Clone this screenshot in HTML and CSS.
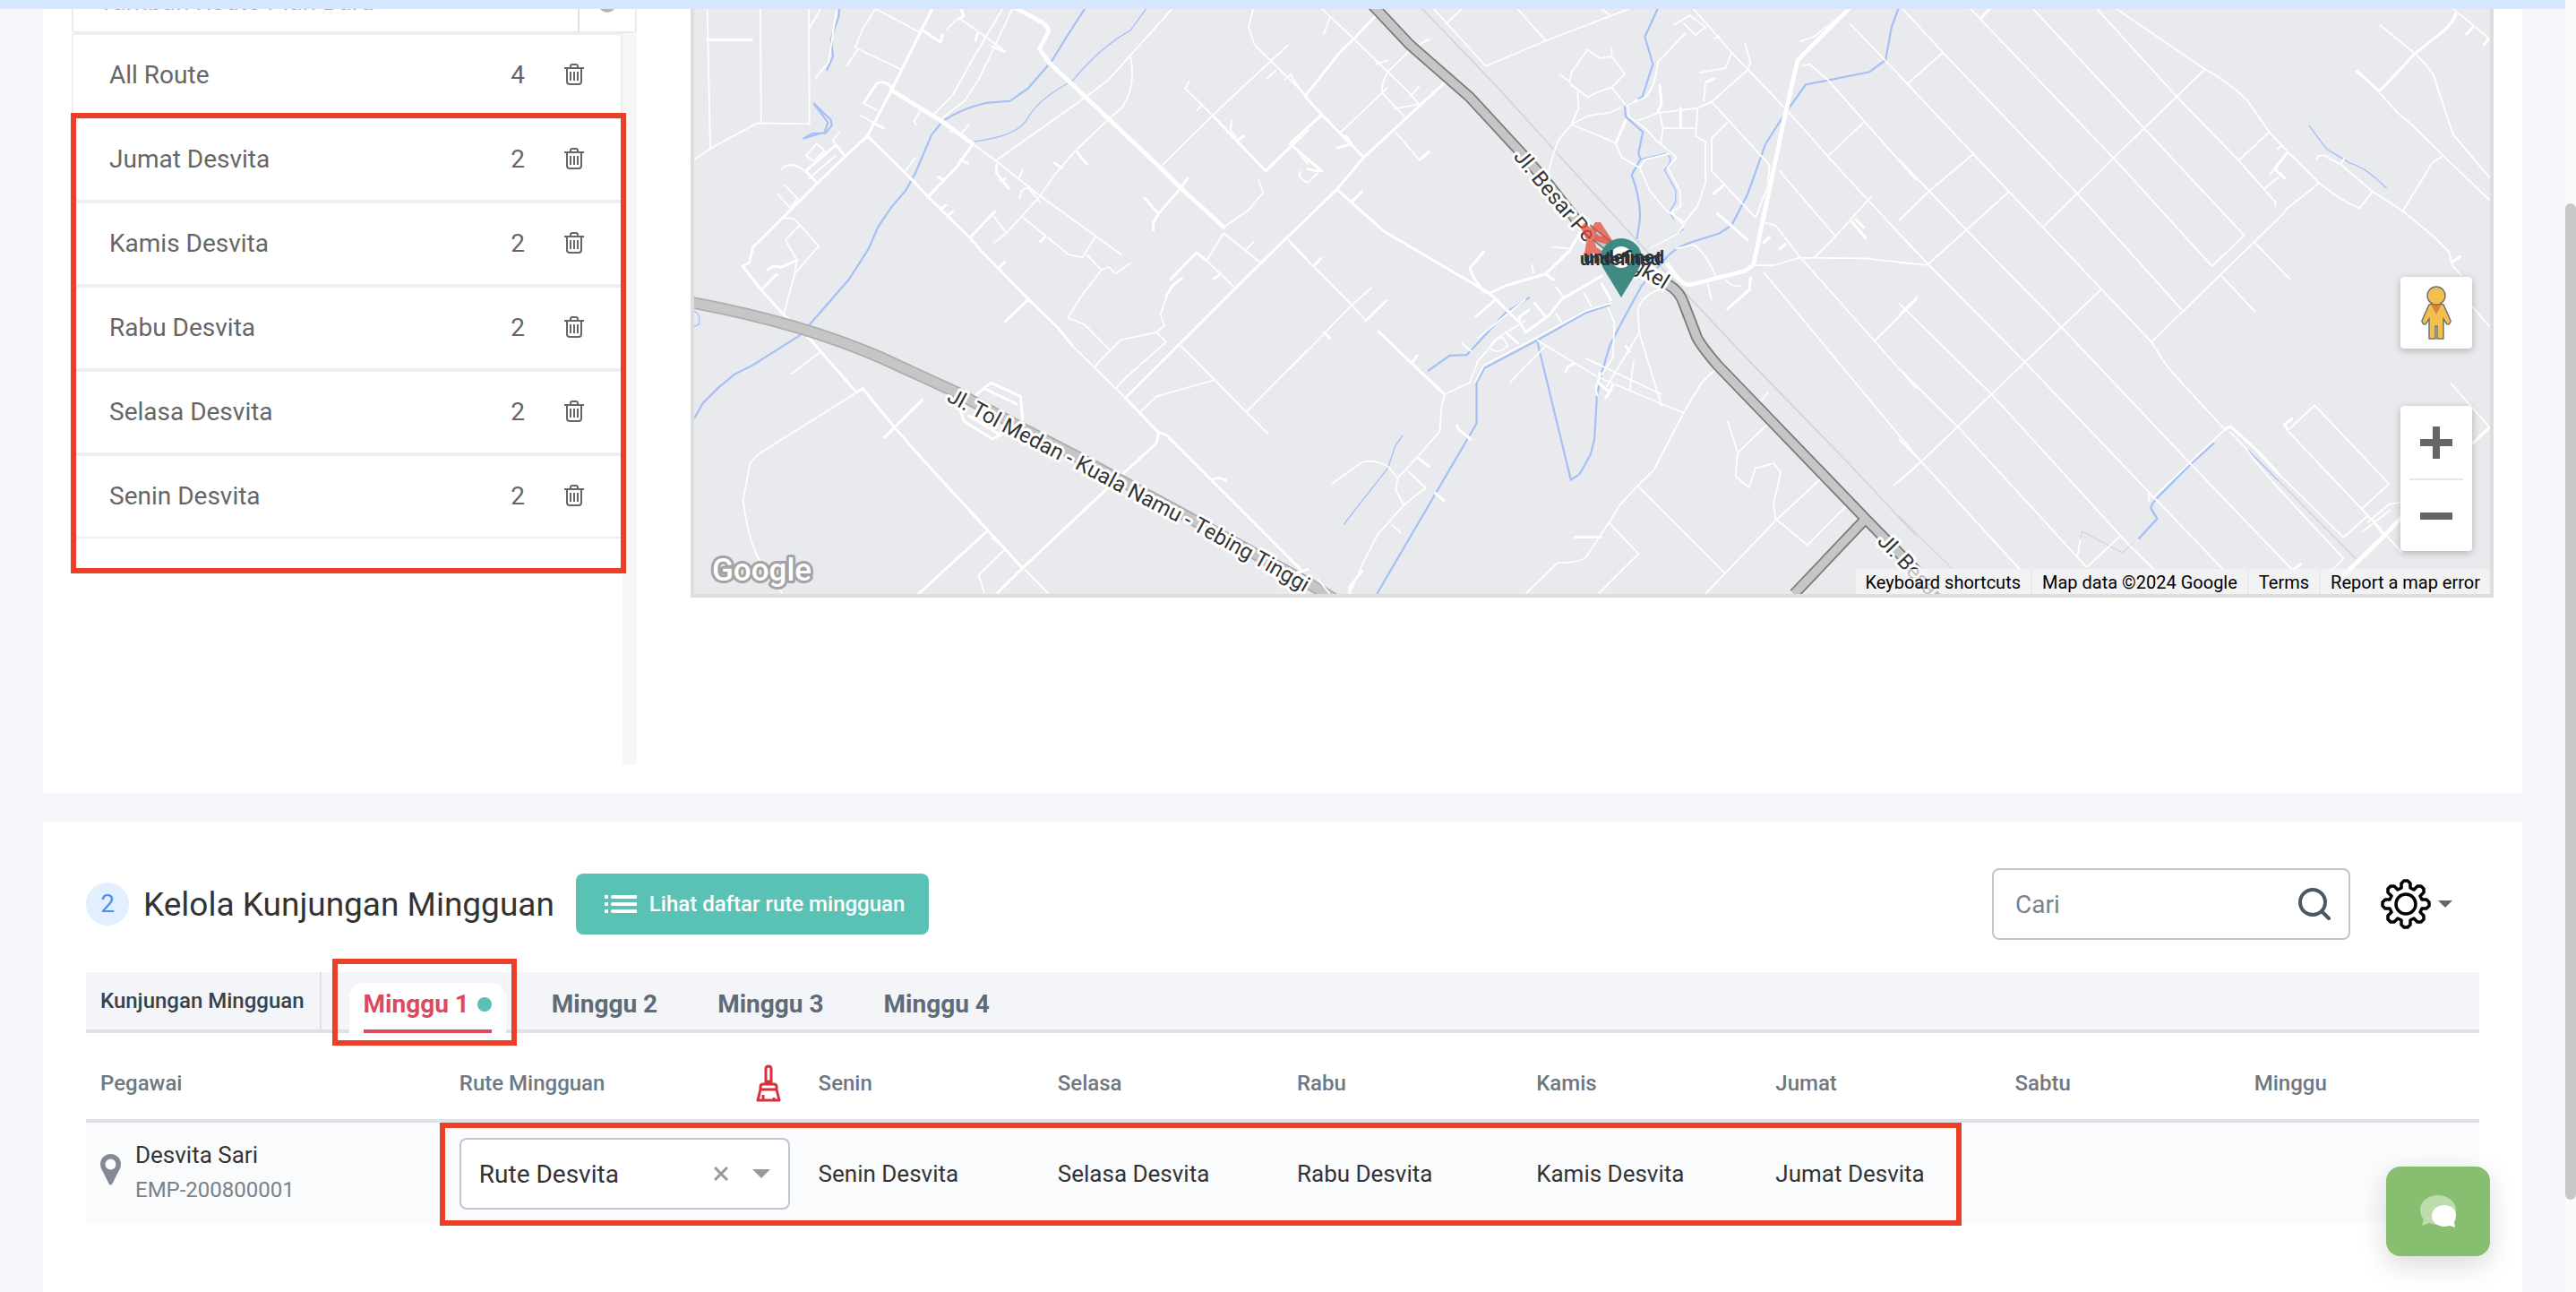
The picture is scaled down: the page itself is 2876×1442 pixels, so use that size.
FILE: index.html
```html
<!DOCTYPE html>
<html lang="id">
<head>
<meta charset="utf-8">
<title>Kelola Kunjungan Mingguan</title>
<link rel="stylesheet" href="styles.css">
</head>
<body>
<svg class="sprite" aria-hidden="true">
  <symbol id="trash" viewBox="0 0 22 24">
    <path d="M0 5h22M7 5V3q0-2 2-2h4q2 0 2 2v2M3 5v15q0 3 3 3h10q3 0 3-3V5M7 9v10M11 9v10M15 9v10" fill="none" stroke="currentColor" stroke-width="2"/>
  </symbol>
</svg>
<div class="notice"></div>
<main class="page">
  <section class="card routes">
    <div class="route-column">
      <form class="new-route">
        <input type="text" aria-label="Tambah Route Plan Baru" placeholder="Tambah Route Plan Baru">
        <button type="button" aria-label="Tambah"><svg width="20" height="20" viewBox="0 0 20 20"><circle cx="10" cy="10" r="10" fill="#b3b3b3"/></svg></button>
      </form>
      <div class="route-panel">
        <ul class="route-list">
          <li><span class="name">All Route</span><span>4</span><button aria-label="Hapus All Route"><svg><use href="#trash"/></svg></button></li>
          <li><span class="name">Jumat Desvita</span><span>2</span><button aria-label="Hapus Jumat Desvita"><svg><use href="#trash"/></svg></button></li>
          <li><span class="name">Kamis Desvita</span><span>2</span><button aria-label="Hapus Kamis Desvita"><svg><use href="#trash"/></svg></button></li>
          <li><span class="name">Rabu Desvita</span><span>2</span><button aria-label="Hapus Rabu Desvita"><svg><use href="#trash"/></svg></button></li>
          <li><span class="name">Selasa Desvita</span><span>2</span><button aria-label="Hapus Selasa Desvita"><svg><use href="#trash"/></svg></button></li>
          <li><span class="name">Senin Desvita</span><span>2</span><button aria-label="Hapus Senin Desvita"><svg><use href="#trash"/></svg></button></li>
        </ul>
        <div class="route-track"></div>
        <div class="highlight highlight-routes"></div>
      </div>
    </div>
    <div class="map">
      <svg class="map-canvas" viewBox="775 0 2005 663" preserveAspectRatio="xMidYMid slice" role="img" aria-label="Peta">
        <rect x="0" y="0" width="2876" height="663" fill="#e8eaed"/>
        <g transform="translate(760 0) scale(.4464 .4337)">
          <g class="water">
            <path d="M1025 0L965 95L928 157L868 228L823 260L763 265Q700 280 655 312L627 348L587 445L563 490L527 533L493 585L470 640L420 720L320 838L295 865L180 940L135 963L95 997L55 1038L34 1077"/>
            <path class="slim" d="M1180 0L1125 78Q1050 120 980 208Q900 250 870 300Q850 350 730 365M34 800L46 812L46 835L34 840"/>
            <path d="M396 0L396 40L376 100L381 145L365 182"/><path d="M332 265L375 308L378 322L362 343L330 343L306 357L360 340L368 315Z" fill="#a5c0f5"/>
          </g>
          <path class="lane" d="M66 0L74 383L34 411M74 383L190 317L322 319L320 0M199 0L201 316M320 76L350 22M390 22L370 160L336 202M487 22L455 75L436 122L550 178M487 22L600 85M442 128L415 170M665 76L695 45L760 93L810 130M805 22L720 170L680 245L633 295M830 22L745 205L710 260L655 303M447 295L508 330M458 265L492 285M590 322L583 312L600 285M670 338L700 345L722 320M730 370L790 415L900 505L1103 656M1240 10L1120 148L1070 205L1010 252L790 412M1125 148Q1140 220 1105 275L1067 310L985 390L935 450L898 505L815 600L781 627M779 552L815 600M853 557L970 655L1005 662L1037 610M1015 655L1052 695L1070 687L1088 704L1126 676M1052 695L1000 765L968 818L1010 835L1074 902L1034 945M1074 902L1100 875L1190 855L1214 880L1115 970L1088 1000M1190 855L1210 838L1200 810L1220 750M980 890L1112 1024M1248 887L1470 1118M1150 1060L1190 1020L1335 978M1415 1060L1568 900M1432 22L1420 70L1435 115L1568 250M1520 115L1420 210L1330 297L1200 430M1272 208L1262 228L1330 297M1445 463L1457 495L1420 540L1358 585M1358 600L1315 670M1358 600L1450 676M1315 670L1387 742M1515 612L1568 668M250 437Q275 410 310 440M241 498L274 535L292 511L259 475M260 562L283 562L345 633L285 705L258 807M297 580L262 618L290 668L285 705M440 1010L200 1165Q175 1185 172 1200L156 1287Q165 1370 190 1430L255 1528M350 905L277 962M860 1465L920 1528M810 1415L745 1480L760 1528M775 1382L795 1400M848 512Q850 480 870 485L900 522M845 462L855 437M562 440L587 405M388 373L380 360L398 340M313 400L340 370L360 388L333 415ZM320 460L388 400M1378 310L1375 335L1390 355M1412 645L1435 620M1290 285L1302 272M1465 203L1490 180M1510 205L1528 190"/>
          <g class="street">
            <path d="M640 0L527 232L467 350L412 402L340 473L180 637L172 675L155 685L200 745L258 810L325 875L440 1010L455 1000L535 1100L605 1182L768 1365L855 1462L790 1528M467 350L578 462L620 508L723 612L760 655L870 770L942 842L980 890M620 505L690 430L730 372M723 612L785 545M870 770L812 827M600 75L650 108L655 90M458 265L490 215Q510 205 527 225M67 103L178 103M595 1528L768 1365M855 1462L1100 1225L1190 1140L1195 1115M1112 1024L1195 1113L1215 1120L1550 1465M1112 1024L1387 742L1515 612L1568 560M1330 1235Q1340 1225 1363 1236M510 1125L603 1030M313 440L388 373L412 402M313 440L340 470M218 695Q230 680 250 688L290 670M202 745L240 706M1226 718L1290 650L1315 670M1160 510L1195 550L1182 572L1182 592M1195 550L1252 482L1268 458M1330 297L1463 440L1530 373L1568 335M1530 373L1568 420M990 390L1015 422M790 425L790 445L820 485M800 465L812 460M700 410L718 420M645 455L657 465M650 540L663 528M668 555L680 545M797 688L810 675M900 622L912 608M935 420L953 432M780 120L810 133M737 105L743 85M700 22L708 40L695 50M480 315L508 330M1333 718L1350 705M1395 360L1408 350M1215 760L1230 735L1253 717"/>
            <path class="wide" d="M800 0L900 55Q925 72 918 85L897 125L920 160L1015 252L1200 432L1252 485L1358 585M527 232L650 310L730 370"/>
            <path d="M735 1020L775 985L850 1020L855 1080M760 1000L840 1040M700 1060L710 1085L780 1130L815 1110M720 1070L800 1120"/>
          </g>
          <path d="M20 777Q300 830 500 920L690 1010L850 1100L1000 1180L1250 1320L1568 1500L1640 1545" fill="none" stroke="#adadad" stroke-width="31"/>
          <path d="M20 777Q300 830 500 920L690 1010L850 1100L1000 1180L1250 1320L1568 1500L1640 1545" fill="none" stroke="#c6c6c6" stroke-width="23"/>
        </g>
        <g transform="translate(1440 0) scale(.4464 .4337)">
          <path class="rail" d="M310 0L520 225L700 430L860 610L940 700L1150 930L1400 1195L1568 1380"/>
          <g class="water">
            <path d="M930 0L888 95L908 165L882 248L838 275L840 300L883 340L872 395L877 410L855 450Q880 520 875 570L868 615"/>
            <path class="slim" d="M877 410L940 395Q965 410 937 437L965 490L965 520L950 545L960 565M283 1120L265 1145L245 1205L180 1290L135 1350M900 640L985 590"/>
            <path d="M1530 0L1505 70L1490 155L1450 185L1290 218L1240 290L1190 370L1145 500L1105 580L1075 600L1000 625Q960 640 940 665L880 735L835 820L800 890L780 960L768 1020L762 1130L752 1170L725 1220L703 1235L618 875M345 955L400 915L443 913L540 805L600 765M218 1528L467 1090L467 985L487 947L620 875L740 805L800 785"/>
          </g>
          <path class="lane" d="M80 22L160 100L245 185L300 240L325 270M100 45L85 88M245 185L305 125L350 100M215 165L245 155M245 185Q225 225 232 240L290 303M325 268L260 280M300 250L325 220M325 270L290 303M128 340L245 225M265 340L323 410M390 62L430 22M340 0L490 170L640 105L850 22M550 0L640 105M780 22L798 38M673 190L700 210L705 185L745 128L775 150L805 145L838 190L805 225L775 235L745 250L700 215M805 225L840 270M805 122L805 145M720 235L722 280L705 320L672 360L655 410L648 440M705 320L815 368M705 320L745 298L800 290L830 275M840 275L870 255M990 85L920 160Q915 220 890 250L845 270L848 300L890 330L915 360L968 405L945 430L975 490L978 530L955 545L985 580L970 600L900 640M815 368L830 405L875 432L900 490L940 540L985 570M875 432L890 410L950 395M870 310L925 290L1020 278L1055 262L1145 180M1020 278L1015 350L1040 365L1040 470L1020 530L985 575M925 290L933 330L928 370M933 330L1012 330M960 65L1000 40L1040 70L1015 90L985 60M990 0L1105 135L1240 280L1370 430L1568 650M1060 100L1075 92M1145 180L1152 160L1138 110M1105 135L1090 175L1025 187M1055 262L1200 425L1195 480L1165 560M1095 315L1055 355L1055 440L1165 560M1035 262L1040 210M1280 170L1300 165L1345 205L1568 465M1400 60L1568 240M1275 107L1310 95L1400 22M1345 403L1435 315M1225 440L1365 608L1310 665M1365 608L1455 505M1568 770L1460 880M1185 572L1215 580L1275 660L1568 1000M1155 683L1210 683L1275 663L1440 665L1568 680M1185 700L1568 1175M0 625L155 785L190 825M155 785L205 740M155 785L0 950M387 1015L450 985L470 930L520 870L590 825M387 1015L380 1045L375 1110L320 1175L270 1230L265 1260L285 1300L220 1375L180 1455L150 1528M285 1300L340 1255L293 1210M270 1230L245 1200Q210 1180 180 1190L105 1245M255 1350L278 1372M618 875L770 970L930 1040L985 1062M640 890L550 985M740 922L930 1015M930 1045L875 860L870 800Q880 760 925 745M875 855L810 965L790 1000M860 930L850 1005M795 790L812 830L808 920L780 965M1065 950L1030 985L985 1062L910 1210L870 1250L825 1300L798 1345L740 1435Q720 1448 670 1448L590 1528M870 1250L1088 1475M1040 1528L1215 1340L1330 1230M798 1345L872 1425L772 1528M1197 1090L1120 1165L1095 1083M1120 1165L1115 1225L1148 1255L1165 1205L1210 1192L1228 1215L1210 1295L1215 1335L1295 1403L1393 1300M1175 1035L1197 1010M1510 1250L1568 1200M680 830L665 805M735 752L755 790M665 738L685 765M805 780L740 800L615 870L485 940L463 985M1045 730L1055 772M965 640L1010 630Q1040 650 1065 710M500 895Q510 865 535 870L545 890Q520 915 500 895M430 883L455 905M605 680L610 705M655 635L700 640M770 1020Q760 990 775 975M1090 720Q1105 740 1128 735M1348 410L1360 415M25 440Q20 460 45 470L75 440M0 190L38 248M0 1440L30 1470M70 1490L100 1528M590 770L470 870"/>
          <g class="street">
            <path d="M215 40L160 100L125 135L38 248L80 295L185 405M80 295L0 370L80 440M390 210L185 405L118 487L0 605M118 487L235 595L500 755L575 830L590 855L650 810L680 770L780 710M120 380L155 370L140 350M325 412L348 390M500 755L540 735L640 705L700 645L725 600M640 705L660 720M515 770L465 815M485 648L450 690L460 715L485 750L500 755M575 830L575 815L598 798M612 780L640 815M540 855L570 883M190 825L240 775M222 853L305 935L387 1015M305 935L318 915M155 520L180 493M60 685L77 665M85 855L100 870M45 435L70 440M1070 550L1145 618M1152 715L1150 745L1095 795M815 370L840 310M925 220L930 265L920 290M977 278L977 330M1060 498L1088 475M1040 212L1060 203M418 1095L422 1105L452 1130M320 1178L348 1200M365 1270L385 1288M713 1382L778 1382M690 957L695 945L712 935M775 960L772 985L800 1010L790 1023M800 1010L808 990M150 1528L150 1510L180 1470M1405 570L1440 612M1415 565L1435 585M1185 625L1200 610M1225 640L1240 628M780 730L803 772M840 890L850 905M0 1480L45 1465"/>
            <path class="wide" d="M1420 0L1270 155L1240 290L1160 680L1140 697L1000 733Q985 733 970 715L945 680"/>
          </g>
          <path d="M1440 1335L1262 1528M195 0L300 115L450 250L580 395L640 465L720 570L830 660L950 735Q975 750 985 780L1015 860Q1020 880 1070 940L1440 1335L1568 1470" fill="none" stroke="#7a7a7a" stroke-width="29"/>
          <path d="M1440 1335L1262 1528M195 0L300 115L450 250L580 395L640 465L720 570L830 660L950 735Q975 750 985 780L1015 860Q1020 880 1070 940L1440 1335L1568 1470" fill="none" stroke="#c6c6c6" stroke-width="21"/>
        </g>
        <g transform="translate(2120 0) scale(.4821 .4337)">
          <g class="water">
            <path class="slim" d="M950 323L990 383L1045 420Q1080 430 1130 485M765 1110L880 1238"/>
            <path d="M730 1140L675 1195L595 1285Q580 1305 585 1310L598 1335L555 1387"/>
          </g>
          <path class="rail slim" d="M880 1238L1060 1440M0 1328L125 1465M420 1385L425 1368L517 1422L540 1400"/>
          <path class="lane" d="M8 22L102 135L415 500L655 797M165 22L500 410L725 685L800 606L568 330L310 22M458 22L643 248L787 413L872 520L872 533M0 193L255 493L585 880M0 410L155 590L375 840L675 1193L910 1465M0 600L68 680L292 932L595 1285L755 1470M0 780L215 1015L535 1405L595 1470M0 948L138 1100L435 1460M0 1130L52 1188L280 1465M709 178L568 330L335 583M470 743L292 932L52 1188L0 1238M255 493L68 680M172 397L70 492L0 568M102 135L21 215M480 5L709 178Q770 215 808 260L858 340L900 390L973 470Q1020 515 1067 536L1097 493M858 340L787 413M973 470L950 492L900 535L890 550L585 880L605 915Q610 930 655 985L755 1105L590 1280L578 1270L580 1292M822 622L907 720M743 705L825 802M967 410Q970 398 985 400L1023 423L1097 493L1167 543L1240 610L1275 650L1280 680L1303 710M1023 423L1033 405M1167 543L1235 420L1260 400L1368 515M1110 235L1155 290L1190 323L1260 400M1113 63L1195 138Q1235 180 1240 200L1283 345L1368 457M1270 10L1368 100M1325 785L1368 840M1277 985L1368 1100M900 1108L963 1043L1135 1245L1072 1310L1165 1422M900 1108L1072 1310M1072 1370L1138 1312M1160 1293L1135 1298L1085 1345M765 1110L805 1155Q820 1190 1030 1437L1000 1470M880 1220L1030 1383L1085 1328M0 675L68 682M845 487L880 455M858 450L870 435M512 1380L435 1460M0 812L43 763M413 1435L420 1390M875 385L885 375"/>
          <g class="street">
            <path d="M1290 35Q1285 60 1250 90L1195 138L1113 235L1085 207L1060 183M1315 88L1330 68M1355 115L1365 100M190 47L225 5M900 392L870 435L893 458M755 1105L768 1097L830 1160L880 1220M900 1105L893 1092L910 1078M1280 675L1300 660M1325 1145L1368 1100M915 1465L930 1452M1095 1335L1125 1378"/>
            <path class="wide" d="M1030 1480L1125 1378L1165 1330"/>
          </g>
        </g>
        <path id="toll" d="M1056 447L1124 484L1204 525L1264 557L1336 594L1405 632L1480 675" fill="none"/>
        <path id="besar" d="M1689 175L1719 212L1762 262L1787 290" fill="none"/>
        <path id="kel" d="M1820 300L1834 309L1880 337" fill="none"/>
        <path id="besar-south" d="M2095 605L2119 630L2180 696" fill="none"/>
        <g class="road-name">
          <text><textPath href="#toll">Jl. Tol Medan - Kuala Namu - Tebing Tinggi</textPath></text>
          <text><textPath href="#besar">Jl. Besar Pe</textPath></text>
          <text><textPath href="#kel">gkel</textPath></text>
          <text><textPath href="#besar-south">Jl. Besar</textPath></text>
        </g>
        <path d="M1767 251L1779 276L1770 286M1767 251L1783 266L1797 270L1784 250L1776 262L1772 286M1778 256L1776 276L1788 284" fill="none" stroke="#e74c3c" stroke-opacity=".75" stroke-width="7" stroke-linejoin="bevel"/>
        <path d="M1810 332L1791 301Q1787 294 1787 288A23 22 0 0 1 1833 288Q1833 294 1829 301Z" fill="#3f8a82"/>
        <circle cx="1810" cy="287" r="12" fill="#fff"/>
        <g class="marker-name"><text x="1764" y="296">undefined</text><text x="1768" y="294">undefined</text></g>
        <text class="brand" x="795" y="648">Google</text>
      </svg>
      <div class="map-controls">
        <button class="pegman" aria-label="Street View">
          <svg width="34" height="60" viewBox="0 0 34 60"><path d="M9 21L1 39q0 4 4 4l4-6v22h7V45h2v14h7V37l4 6q4 0 4-4L25 21q-8-2-16 0z" fill="#f3bf4d" stroke="#737373" stroke-width="1.5"/><path d="M11 21h12l-6 11z" fill="#d98538"/><circle cx="17" cy="11" r="10" fill="#f3bf4d" stroke="#737373" stroke-width="1.5"/></svg>
        </button>
        <div class="zoom">
          <button aria-label="Perbesar"><svg width="36" height="36" viewBox="0 0 36 36"><path d="M14 0h8v14h14v8H22v14h-8V22H0v-8h14z" fill="#666"/></svg></button>
          <button aria-label="Perkecil"><svg width="36" height="36" viewBox="0 0 36 36"><path d="M0 14h36v8H0z" fill="#666"/></svg></button>
        </div>
      </div>
      <div class="map-footer">
        <button>Keyboard shortcuts</button><span>Map data ©2024 Google</span><a href="#terms">Terms</a><a href="#report">Report a map error</a>
      </div>
    </div>
  </section>

  <section class="card weekly">
    <header class="weekly-head">
      <span class="step">2</span>
      <h2>Kelola Kunjungan Mingguan</h2>
      <button class="list-button">
        <svg width="36" height="22" viewBox="0 0 36 22"><path d="M9 3h26M9 11h26M9 19h26" stroke="#fff" stroke-width="4" stroke-linecap="round"/><path d="M2 1v4M2 9v4M2 17v4" stroke="#fff" stroke-width="4"/></svg>
        Lihat daftar rute mingguan
      </button>
      <label class="search">
        <input type="search" aria-label="Cari" placeholder="Cari">
        <svg width="38" height="38" viewBox="0 0 38 38"><circle cx="17" cy="17" r="14" fill="none" stroke="#4b5761" stroke-width="4"/><path d="M27 27l8 8" stroke="#4b5761" stroke-width="4" stroke-linecap="round"/></svg>
      </label>
      <button class="settings" aria-label="Pengaturan">
        <svg width="56" height="56" viewBox="0 0 56 56" fill="none" stroke="#000" stroke-width="3.5" stroke-linejoin="round"><path d="M23 10V5L26 2H30L33 5V10L37 12L41 8H45L48 11V15L44 19L46 23H51L54 26V30L51 33H46L44 37L48 41V45L45 48H41L37 44L33 46V51L30 54H26L23 51V46L19 44L15 48H11L8 45V41L12 37L10 33H5L2 30V26L5 23H10L12 19L8 15V11L11 8H15L19 12Z"/><circle cx="28" cy="28" r="11"/></svg>
        <svg width="16" height="8" viewBox="0 0 16 8"><path d="M0 0h16l-8 8z" fill="#666"/></svg>
      </button>
    </header>

    <nav class="weeks">
      <span class="weeks-title">Kunjungan Mingguan</span>
      <div class="tabs">
        <button class="tab active"><span>Minggu 1<i class="dot"></i></span></button>
        <button class="tab"><span>Minggu 2</span></button>
        <button class="tab"><span>Minggu 3</span></button>
        <button class="tab"><span>Minggu 4</span></button>
        <div class="highlight highlight-tab"></div>
      </div>
    </nav>

    <div class="visits">
      <table>
        <colgroup><col class="c-wide"><col class="c-wide"><col><col><col><col><col><col><col></colgroup>
        <thead>
          <tr>
            <th>Pegawai</th>
            <th><div class="route-head">Rute Mingguan
              <button aria-label="Bersihkan"><svg width="28" height="42" viewBox="0 0 28 42" fill="none" stroke="#d9303e" stroke-width="3" stroke-linejoin="round"><path d="M11 22V5q0-3 3-3t3 3V22M11 19h6M5 28V25q0-3 3-3h12q3 0 3 3v3zM5 28L2 40h24L23 28M8 40v-6M20 40v-3"/></svg></button></div></th>
            <th>Senin</th><th>Selasa</th><th>Rabu</th><th>Kamis</th><th>Jumat</th><th>Sabtu</th><th>Minggu</th>
          </tr>
        </thead>
        <tbody>
          <tr>
            <td><div class="employee">
              <svg width="23" height="35" viewBox="0 0 23 35"><path fill-rule="evenodd" d="M11.500 0A11.500 11.500 0 0 0 0 11.500Q0 16 3 20L9.500 33q2 3 4 0L20 20q3-4 3-8.500A11.500 11.500 0 0 0 11.500 0zm0 5.500a6 6 0 1 1 0 12 6 6 0 0 1 0-12z" fill="#838a94"/></svg>
              <div><div class="emp-name">Desvita Sari</div><div class="emp-id">EMP-200800001</div></div>
            </div></td>
            <td><div class="picker">
              <select aria-label="Rute Mingguan"><option>Rute Desvita</option></select>
              <button class="clear" aria-label="Hapus pilihan"><svg width="16" height="16" viewBox="0 0 16 16"><path d="M1 1l14 14M15 1L1 15" stroke="#999" stroke-width="3"/></svg></button>
              <svg class="caret" width="20" height="10" viewBox="0 0 20 10"><path d="M0 0h20L10 10z" fill="#999"/></svg>
            </div></td>
            <td>Senin Desvita</td><td>Selasa Desvita</td><td>Rabu Desvita</td><td>Kamis Desvita</td><td>Jumat Desvita</td><td></td><td></td>
          </tr>
        </tbody>
      </table>
      <div class="highlight highlight-row"></div>
    </div>
  </section>
</main>
<button class="chat" aria-label="Chat">
  <svg width="40" height="36" viewBox="0 0 40 36"><path d="M20 0C9 0 0 7 0 16q0 7 4 11L2 34l8-3q5 2 10 2 20-1 20-17C40 7 31 0 20 0z" fill="#bddcae"/><path d="M27 11c8 0 13 5 13 11q0 5-2 8l1 6-6-2q-3 1-6 1c-8 0-14-5-14-12s6-12 14-12z" fill="#fff"/></svg>
</button>
<div class="page-scroll"><div class="page-thumb"></div></div>
</body>
</html>
```
FILE: styles.css
```css
* { box-sizing: border-box; }

body {
  margin: 0;
  height: 100vh;
  overflow: hidden;
  background: #f5f7fa;
  color: #333;
  font-family: Roboto, "Liberation Sans", sans-serif;
  font-size: 28px;
}

button {
  margin: 0;
  padding: 0;
  border: 0;
  background: none;
  color: inherit;
  font: inherit;
}

svg { display: block; }
.sprite { position: absolute; width: 0; height: 0; }

.notice {
  position: fixed;
  z-index: 5;
  top: 0;
  left: 0;
  right: 12px;
  height: 10px;
  background: #d5e7fe;
}

.page {
  display: flex;
  flex-direction: column;
  gap: 32px;
  height: 100%;
  padding: 0 60px 0 48px;
}

.card { background: #fff; }

.highlight {
  position: absolute;
  border: 6px solid #eb4027;
  pointer-events: none;
}

/* Route list and map */
.routes {
  display: flex;
  flex: none;
  align-items: flex-start;
  gap: 60px;
  padding: 0 32px 32px;
}

.route-column { flex: none; width: 631px; }

.new-route {
  display: flex;
  height: 72px;
  margin-top: -35px;
  border: 2px solid #ebebeb;
  border-radius: 4px;
}

.new-route input {
  flex: 1;
  min-width: 0;
  padding: 0 28px;
  border: 0;
  background: none;
  font: inherit;
}

.new-route input::placeholder { color: #aaa; opacity: 1; }

.new-route button {
  display: flex;
  justify-content: center;
  width: 64px;
  padding-top: 27px;
  border-left: 2px solid #e3e3e3;
}

.route-panel {
  position: relative;
  display: flex;
  height: 816px;
}

.route-list {
  flex: 1;
  margin: 0;
  padding: 0;
  list-style: none;
  color: #666;
}

.route-list li {
  display: flex;
  align-items: center;
  height: 94px;
  padding: 0 41px 2px 40px;
  border: 2px solid #efefef;
}

.route-list .name { flex: 1; }
.route-list button { margin-left: 44px; }
.route-list svg { width: 22px; height: 24px; }
.route-track { width: 16px; background: #f7f7f7; }

.highlight-routes { top: 89px; left: -1px; right: 12px; height: 514px; }

.map {
  position: relative;
  flex: 1;
  height: 667px;
  border: 4px solid #dcdddd;
  border-top: 0;
}

.map-canvas { width: 100%; height: 100%; }
.water path { fill: none; stroke: #a5c0f5; stroke-width: 5; }
.water .slim { stroke-width: 3; }
.rail { fill: none; stroke: #d3d5d8; stroke-width: 4; }
.rail.slim { stroke-width: 3; }
.lane { fill: none; stroke: #fff; stroke-width: 4; stroke-linejoin: round; }
.street { filter: drop-shadow(0 0 1px #c4c6ca); }
.street path { fill: none; stroke: #fff; stroke-width: 8; stroke-linecap: round; stroke-linejoin: round; }
.street .wide { stroke-width: 12; }

.road-name {
  fill: #333;
  stroke: #fff;
  stroke-width: 6px;
  stroke-linejoin: round;
  paint-order: stroke;
  font-size: 24px;
}

.marker-name { fill: #263238; font-size: 20px; font-weight: 700; }

.brand {
  fill: #fff;
  stroke: #a3a3a3;
  stroke-width: 6px;
  stroke-linejoin: round;
  paint-order: stroke;
  font-size: 35px;
  font-weight: 500;
}

.map-controls {
  position: absolute;
  right: 20px;
  bottom: 48px;
  display: flex;
  flex-direction: column;
  gap: 64px;
  width: 80px;
}

.pegman, .zoom {
  background: #fff;
  border-radius: 4px;
  box-shadow: 0 2px 8px rgba(0, 0, 0, .25);
}

.pegman { display: grid; place-items: center; height: 80px; }
.zoom { padding: 0 10px; }
.zoom button { display: grid; place-items: center; width: 100%; height: 81px; }
.zoom button + button { border-top: 2px solid #e6e6e6; }

.map-footer {
  position: absolute;
  right: 0;
  bottom: 0;
  display: flex;
  gap: 2px;
  height: 28px;
  color: #000;
  font-size: 20px;
  line-height: 30px;
}

.map-footer > * { height: 28px; padding: 0 11px; background: rgba(245, 245, 245, .72); }
.map-footer a { color: inherit; text-decoration: none; }

/* Weekly visits */
.weekly { flex: 1; padding: 52px 48px 0; }

.weekly-head {
  display: flex;
  align-items: center;
  height: 80px;
  padding-right: 30px;
  margin-bottom: 36px;
}

.step {
  width: 48px;
  height: 48px;
  margin-right: 16px;
  border-radius: 50%;
  background: #e1efff;
  color: #4a90f5;
  line-height: 48px;
  text-align: center;
}

h2 { margin: 0 24px 0 0; font-size: 37px; font-weight: 400; }

.list-button {
  display: flex;
  align-items: center;
  gap: 14px;
  height: 68px;
  padding: 0 27px 0 32px;
  border-radius: 8px;
  background: #5ac2b4;
  color: #fff;
  font-size: 24px;
  font-weight: 500;
}

.search {
  display: flex;
  align-items: center;
  width: 400px;
  height: 80px;
  margin: 0 34px 0 auto;
  padding: 0 19px 0 24px;
  border: 2px solid #c0c6cf;
  border-radius: 8px;
}

.search input {
  flex: 1;
  min-width: 0;
  padding: 0;
  border: 0;
  outline: 0;
  background: none;
  font: inherit;
  appearance: none;
}

.search input::placeholder { color: #78828c; opacity: 1; }
.settings { display: flex; align-items: center; gap: 8px; }

.weeks {
  display: flex;
  height: 68px;
  border-bottom: 4px solid #dfe1e6;
  background: #f4f5f8;
}

.weeks-title {
  padding: 0 17px 0 16px;
  border-right: 2px solid #dfe1e6;
  color: #37424a;
  font-size: 24px;
  font-weight: 500;
  line-height: 64px;
}

.tabs {
  position: relative;
  display: flex;
  gap: 35px;
  height: 56px;
  margin: 12px 0 0 31px;
}

.tab {
  height: 56px;
  padding: 0 16px;
  border-radius: 16px 16px 0 0;
  color: #5f6b76;
  font-weight: 700;
}

.tab span { display: flex; align-items: center; gap: 9px; height: 56px; padding-bottom: 9px; }
.tab.active { background: #fff; color: #db4a60; }
.tab.active span { padding-bottom: 5px; border-bottom: 4px solid #db4a60; }
.dot { width: 16px; height: 16px; border-radius: 50%; background: #5ac2b4; }

.highlight-tab { top: -27px; left: -19px; width: 206px; height: 97px; }

.visits { position: relative; }

table {
  width: 100%;
  table-layout: fixed;
  border-collapse: separate;
  border-spacing: 0;
}

col { width: 10%; }
.c-wide { width: 15%; }

th {
  padding: 42px 16px 26px;
  border-bottom: 4px solid #dfe1e6;
  color: #6e7882;
  font-size: 24px;
  font-weight: 500;
  line-height: 28px;
  text-align: left;
}

.route-head { display: flex; align-items: center; justify-content: space-between; height: 28px; padding-right: 10px; }

td {
  height: 113px;
  padding: 17px 16px 16px;
  background: #fafbfc;
  font-size: 26px;
}

.employee { display: flex; align-items: center; gap: 16px; padding-bottom: 2px; line-height: 39px; }
.employee svg { margin-bottom: 8px; }
.emp-id { color: #78828c; font-size: 24px; }

.picker {
  display: grid;
  grid-template-columns: 1fr 16px 20px;
  align-items: center;
  column-gap: 27px;
  height: 80px;
  padding-right: 20px;
  border: 2px solid #c0c6cf;
  border-radius: 8px;
  background: #fff;
}

.picker select {
  width: 100%;
  height: 76px;
  padding: 0 0 0 20px;
  border: 0;
  background: none;
  color: #333;
  font: inherit;
  font-size: 28px;
  appearance: none;
}

.highlight-row {
  top: 100px;
  left: calc(15% - 6px);
  right: calc(20% + 44px);
  height: 115px;
}

.chat {
  position: fixed;
  right: 96px;
  bottom: 40px;
  display: grid;
  place-items: center;
  width: 116px;
  height: 100px;
  border-radius: 16px;
  background: #87be6f;
  box-shadow: 0 10px 30px rgba(0, 0, 0, .15);
}

.page-scroll {
  position: fixed;
  z-index: 6;
  top: 0;
  right: 0;
  bottom: 0;
  width: 12px;
  padding-top: 227px;
  background: #fafafa;
}

.page-thumb { height: 1112px; border-radius: 6px; background: #c8c8c8; }
```
